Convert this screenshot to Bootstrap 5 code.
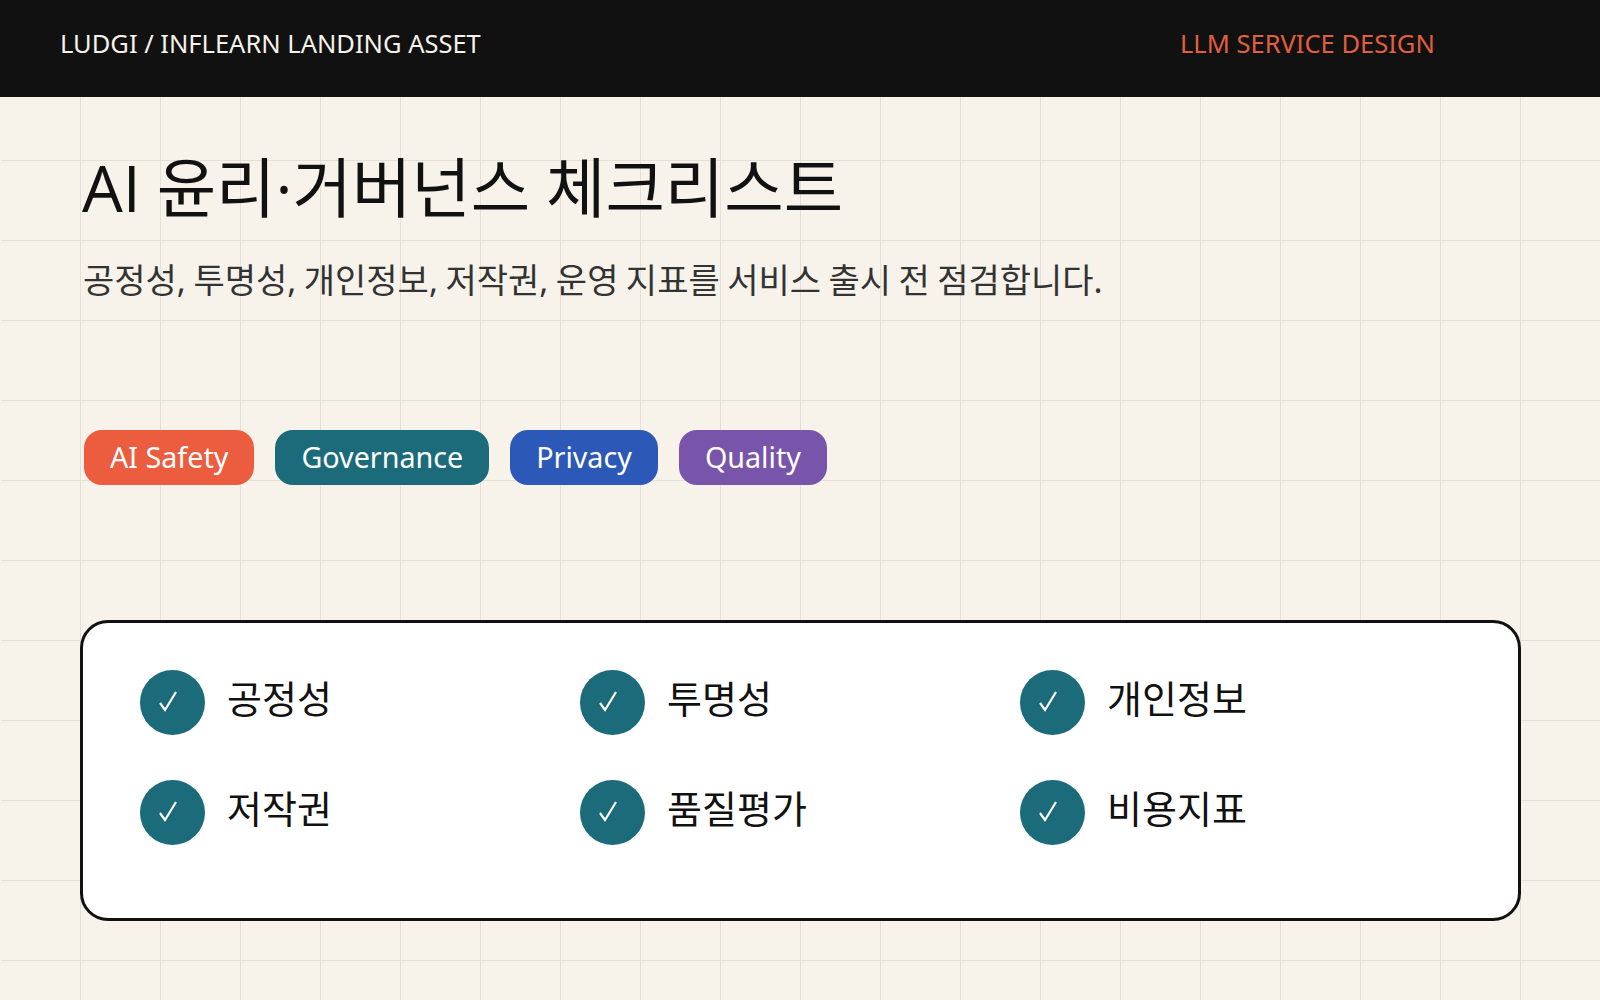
<!DOCTYPE html>
<html lang="ko">
<head>
  <meta charset="UTF-8" />
  <title>AI 윤리·거버넌스 체크리스트</title>
  <meta name="viewport" content="width=device-width, initial-scale=1" />
  <link href="https://cdn.jsdelivr.net/npm/bootstrap@5.3.0/dist/css/bootstrap.min.css" rel="stylesheet"/>
  <style>
    body {
      font-family: "Noto Sans", "Noto Sans CJK KR", sans-serif;
      height: 1000px;
      overflow: hidden;
      color: #111;
      background-color: #f7f3eb;
      background-image:
        linear-gradient(90deg, #f7f3eb 1px, transparent 1px),
        linear-gradient(#e4e0d8 1px, transparent 1px),
        linear-gradient(90deg, #e4e0d8 1px, transparent 1px);
      background-size: 100% 100%, 80px 80px, 80px 80px;
    }
    .top-strip { height: 97px; background: #111; padding: 23px 60px 0; font-size: 25.5px; line-height: 40px; }
    .top-left { width: 1120px; color: #f6f2ea; }
    .top-right { color: #e05f40; }
    .sheet-head { padding: 48px 82px 0; }
    .sheet-title { font-family: "Open Sans", "Noto Sans CJK KR", sans-serif; font-size: 64.6px; line-height: 84px; font-weight: 400; word-spacing: -1px; margin: 0; color: #111; }
    .sheet-sub { font-size: 34px; line-height: 44px; word-spacing: -1.4px; margin: 29px 0 0 1px; color: #333; }
    .tag-row { margin: 128px 0 0 84px; gap: 21px; }
    .tag-pill { height: 55px; border-radius: 18px; padding: 0 26px; font-size: 28.7px; line-height: 53px; color: #fff; }
    .tag-coral { background: #ec5c3e; }
    .tag-teal { background: #1b6b7a; }
    .tag-blue { background: #2c59b7; }
    .tag-violet { background: #7855ab; }
    .check-box { width: 1441px; height: 301px; margin: 135px 0 0 80px; background: #fff; border: 3px solid #111; border-radius: 28px; padding: 47px 0 0 57px; }
    .check-item { width: 440px; height: 65px; margin-bottom: 45px; gap: 22px; font-size: 38px; line-height: 56px; color: #111; }
    .check-dot { width: 65px; height: 65px; background: #1b6b7a; }
  </style>
</head>
<body>
  <header class="top-strip d-flex">
    <div class="top-left">LUDGI / INFLEARN LANDING ASSET</div>
    <div class="top-right">LLM SERVICE DESIGN</div>
  </header>

  <section class="sheet-head">
    <h1 class="sheet-title">AI 윤리·거버넌스 체크리스트</h1>
    <p class="sheet-sub">공정성, 투명성, 개인정보, 저작권, 운영 지표를 서비스 출시 전 점검합니다.</p>
  </section>

  <div class="tag-row d-flex">
    <span class="tag-pill tag-coral">AI Safety</span>
    <span class="tag-pill tag-teal">Governance</span>
    <span class="tag-pill tag-blue">Privacy</span>
    <span class="tag-pill tag-violet">Quality</span>
  </div>

  <div class="check-box d-flex flex-wrap align-content-start">
    <div class="check-item d-flex"><span class="check-dot rounded-circle"><svg width="65" height="65" viewBox="0 0 65 65" fill="none" stroke="#fff" stroke-width="2.2"><path d="M20 33l5 7 11-18"/></svg></span><span>공정성</span></div>
    <div class="check-item d-flex"><span class="check-dot rounded-circle"><svg width="65" height="65" viewBox="0 0 65 65" fill="none" stroke="#fff" stroke-width="2.2"><path d="M20 33l5 7 11-18"/></svg></span><span>투명성</span></div>
    <div class="check-item d-flex"><span class="check-dot rounded-circle"><svg width="65" height="65" viewBox="0 0 65 65" fill="none" stroke="#fff" stroke-width="2.2"><path d="M20 33l5 7 11-18"/></svg></span><span>개인정보</span></div>
    <div class="check-item d-flex"><span class="check-dot rounded-circle"><svg width="65" height="65" viewBox="0 0 65 65" fill="none" stroke="#fff" stroke-width="2.2"><path d="M20 33l5 7 11-18"/></svg></span><span>저작권</span></div>
    <div class="check-item d-flex"><span class="check-dot rounded-circle"><svg width="65" height="65" viewBox="0 0 65 65" fill="none" stroke="#fff" stroke-width="2.2"><path d="M20 33l5 7 11-18"/></svg></span><span>품질평가</span></div>
    <div class="check-item d-flex"><span class="check-dot rounded-circle"><svg width="65" height="65" viewBox="0 0 65 65" fill="none" stroke="#fff" stroke-width="2.2"><path d="M20 33l5 7 11-18"/></svg></span><span>비용지표</span></div>
  </div>

  <script src="https://cdn.jsdelivr.net/npm/bootstrap@5.3.0/dist/js/bootstrap.bundle.min.js"></script>
</body>
</html>
